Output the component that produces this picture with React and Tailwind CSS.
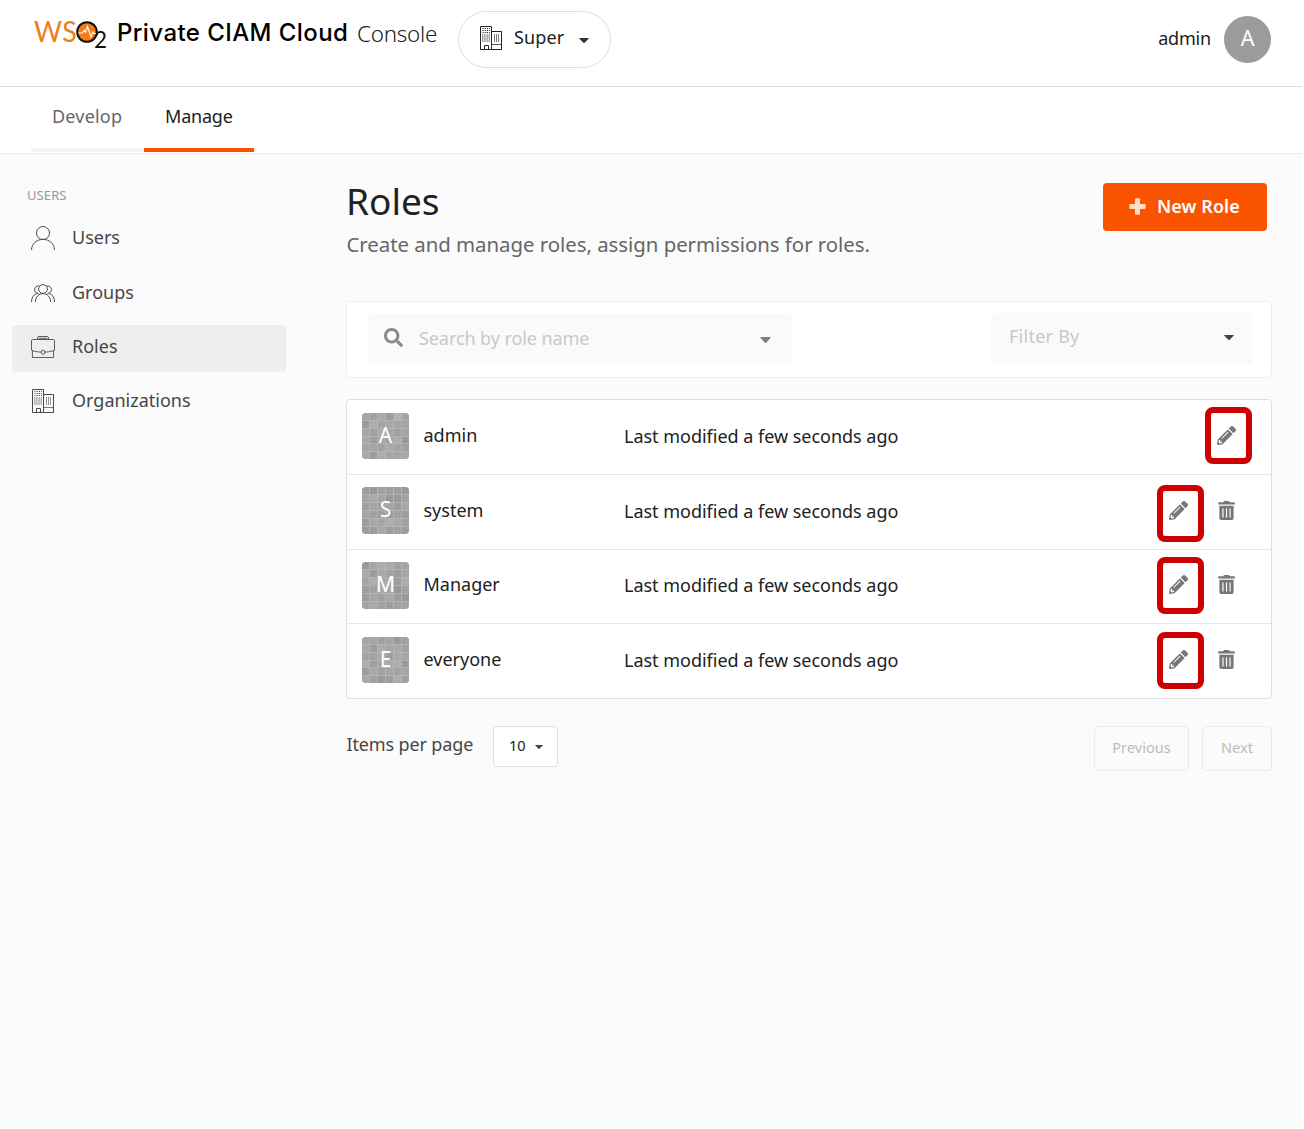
import { FaPencilAlt, FaSearch, FaTrashAlt } from "react-icons/fa";

const ROLES = [
  { name: "admin", letter: "A", row: "h-[75px] pt-[13px] border-b", avatar: "h-[46px]", deletable: false, mark: "left-[858px] top-[7px]",
    shades: ["324163", "053433", "325323", "413250", "332432", "415334"] },
  { name: "system", letter: "S", row: "h-[75px] pt-[13px] border-b", avatar: "h-[47px] -mt-px", deletable: true, mark: "left-[810px] top-[85px]",
    shades: ["102110", "343002", "232314", "321121", "143542", "114121"] },
  { name: "Manager", letter: "M", row: "h-[74px] pt-[12px] border-b", avatar: "h-[47px]", deletable: true, mark: "left-[810px] top-[157px]",
    shades: ["035423", "414213", "353415", "124302", "132410", "342123"] },
  { name: "everyone", letter: "E", row: "h-[74px] pt-[13px]", avatar: "h-[46px]", deletable: true, mark: "left-[810px] top-[232px]",
    shades: ["332302", "415342", "324143", "513450", "142323", "420152"] },
];
const GRAYS = ["#999999", "#9d9d9d", "#a1a1a1", "#a5a5a5", "#a9a9a9", "#adadad"];

function Caret({ className }) {
  return (
    <svg viewBox="0 0 10 5" preserveAspectRatio="none" className={className} fill="currentColor">
      <path d="M.6 0H9.4Q10.2 0 9.6.7L5.6 4.7Q5 5.3 4.4 4.7L.4.7Q-.2 0 .6 0Z" />
    </svg>
  );
}

function PlusIcon({ className }) {
  return (
    <svg viewBox="0 0 17 17" className={className} fill="currentColor">
      <path d="M7 .3H10Q11 .3 11 1.3V6H15.7Q16.7 6 16.7 7V10Q16.7 11 15.7 11H11V15.7Q11 16.7 10 16.7H7Q6 16.7 6 15.7V11H1.3Q.3 11 .3 10V7Q.3 6 1.3 6H6V1.3Q6 .3 7 .3Z" />
    </svg>
  );
}

function BuildingIcon({ className }) {
  return (
    <svg viewBox="0 0 22 24" className={className} fill="none" stroke="currentColor">
      <path d="M.5.5H11.5V23.5H.5ZM11.5 5.5H21.5V23.5H11.5M4.5 23.5V19.5H8.5V23.5" />
      <path d="M12 18.5H21" strokeOpacity=".75" />
      <path d="M2.5 2.5H10M2.5 4.5H10M2.5 6.5H10" strokeDasharray="1.1 1.1" />
      <path d="M2.8 8V16M4.9 8V16M7.1 8V16M9.2 8V16M14.5 8V16M16.5 8V16M18.5 8V16" strokeOpacity=".75" strokeWidth=".8" />
    </svg>
  );
}

function UserIcon() {
  return (
    <svg viewBox="0 0 24 24" className="w-6 h-6" fill="none" stroke="currentColor">
      <circle cx="12" cy="7" r="6.5" />
      <path d="M.5 24C.7 17.6 5.6 13.4 12 13.4S23.3 17.6 23.5 24" />
    </svg>
  );
}

function GroupIcon() {
  return (
    <svg viewBox="0 0 24 18" className="w-6 h-[18px]" fill="none" stroke="currentColor">
      <circle cx="12" cy="5" r="4.4" />
      <path d="M4.4 18C4.5 13 7.6 9.6 12 9.6S19.5 13 19.6 18" />
      <path d="M8.3 1.9C5.8 1.4 3.6 3.2 3.6 5.7C3.6 8 5.2 9.5 7.6 9.5M15.7 1.9C18.2 1.4 20.4 3.2 20.4 5.7C20.4 8 18.8 9.5 16.4 9.5" />
      <path d="M.5 18C.5 13.4 2.6 10.6 5.8 9.4M23.5 18C23.5 13.4 21.4 10.6 18.2 9.4" />
    </svg>
  );
}

function CaseIcon() {
  return (
    <svg viewBox="0 0 24 22" className="w-6 h-[22px]" fill="none" stroke="currentColor" strokeWidth=".9">
      <path d="M.5 4.5Q.5 3.5 1.5 3.5H22.5Q23.5 3.5 23.5 4.5V14.2C20 15.6 17 16 13.8 16.1M10.2 16.1C7 16 4 15.6.5 14.2V4.5" />
      <path d="M1.4 14.8V21.5H22.6V14.8M6.5 3.3V2Q6.5.5 8 .5H16Q17.5.5 17.5 2V3.3M8.3 3.3V2.3H15.7V3.3" />
      <ellipse cx="12" cy="16.2" rx="1.8" ry="2.1" />
    </svg>
  );
}

function Logo() {
  return (
    <svg viewBox="-2 -12 76 52" className="-ml-[2px] mt-[7px] h-[52px] w-[76px] shrink-0">
      <text x="0" y="23" fontFamily="Lato, sans-serif" fontSize="28.5" fill="#f07d15" textLength="28" lengthAdjust="spacingAndGlyphs">W</text>
      <text x="28.2" y="23" fontFamily="Lato, sans-serif" fontSize="28.5" fill="#f07d15" textLength="14.5" lengthAdjust="spacingAndGlyphs">S</text>
      <circle cx="53" cy="13" r="9.8" fill="#f47b16" stroke="#111" strokeWidth="2" />
      <path d="M44.5 14H48.3L50.3 11.5L51.5 13.2L53.5 7.5L57 18L59 13L60 14.5H62" fill="none" stroke="#fff" strokeWidth="1.1" />
      <text x="60" y="29" fontFamily="Lato, sans-serif" fontSize="24" fill="#111" textLength="13" lengthAdjust="spacingAndGlyphs">2</text>
    </svg>
  );
}

function RoleAvatar({ role }) {
  return (
    <div className={`relative w-[47px] shrink-0 overflow-hidden rounded-[4px] ${role.avatar}`}>
      <div className="grid h-full w-full grid-cols-6 grid-rows-6 gap-px bg-[#b3b3b3]">
        {role.shades.join("").split("").map((s, i) => (
          <div key={i} style={{ backgroundColor: GRAYS[+s] }} />
        ))}
      </div>
      <span className="absolute inset-x-0 top-0 text-center text-[21px] leading-[44px] text-white">{role.letter}</span>
    </div>
  );
}

function NavItem({ icon, label, active, className }) {
  return (
    <div className={`flex h-[47px] items-center rounded-[4px] pl-[19px] text-[#464646] ${active ? "bg-[#eeeeee]" : ""} ${className}`}>
      <span className="flex w-6 shrink-0 justify-center pb-[3px] text-[#4a4a4a]">{icon}</span>
      <span className="ml-[17px] pb-[6px] text-[18px] leading-6">{label}</span>
    </div>
  );
}

export default function App() {
  return (
    <div className="h-[1129px] w-[1304px] overflow-hidden bg-white font-['Noto_Sans',sans-serif] text-[#212121]">
      <div className="flex h-[1128px] w-[1302px] flex-col bg-[#fbfbfb]">
        <header className="flex h-[87px] shrink-0 items-start border-b border-[#dddddd] bg-white pl-[34px]">
          <Logo />
          <span className="ml-[9px] mt-[20px] w-[240px] whitespace-nowrap font-['Inter',sans-serif] text-[24px] font-medium leading-[25px] tracking-[0.43px] text-black">Private CIAM Cloud</span>
          <span className="mt-[18px] w-[101px] text-[22.4px] font-light leading-8 tracking-[-0.25px]">Console</span>
          <div className="mt-[11px] flex h-[57px] w-[153px] items-center rounded-full border border-[#dddedf] pl-[21px]">
            <BuildingIcon className="h-6 w-[22px] -mt-[3px] text-[#222]" />
            <span className="ml-[12px] -mt-[5px] text-[18px] tracking-[0.1px]">Super</span>
            <Caret className="ml-[15px] mt-[2px] h-[5px] w-[10px] text-[#333]" />
          </div>
          <span className="ml-auto mt-[24px] text-[18px] leading-7 tracking-[-0.2px]">admin</span>
          <div className="ml-[13px] mr-[31px] mt-4 h-[47px] w-[47px] rounded-full bg-[#9c9c9c] text-center text-[21.5px] leading-[44px] text-white">A</div>
        </header>

        <nav className="flex h-[67px] shrink-0 border-b border-[#ebebeb] bg-white pl-[31px] text-[18px] leading-[58px]">
          <div className="h-[65px] w-[113px] border-b-4 border-[#f4f4f4] pl-[21px] tracking-[0.2px] text-[#666]">Develop</div>
          <div className="h-[65px] w-[110px] border-b-4 border-[#ff5000] pl-[21px] tracking-[-0.2px]">Manage</div>
        </nav>

        <div className="flex flex-1">
          <aside className="w-[346px] shrink-0 pl-3 pr-[60px]">
            <p className="mt-[33px] pl-[15px] text-[13px] leading-4 tracking-[0.1px] text-[#989898]">USERS</p>
            <NavItem className="mt-[13px]" icon={<UserIcon />} label="Users" />
            <NavItem className="mt-[8px]" icon={<GroupIcon />} label="Groups" />
            <NavItem className="mt-[7px]" icon={<CaseIcon />} label="Roles" active />
            <NavItem className="mt-[7px]" icon={<BuildingIcon className="h-6 w-[22px]" />} label="Organizations" />
          </aside>

          <main className="w-[926px]">
            <div className="flex h-[147px] justify-between">
              <div>
                <h1 className="mt-[24px] text-[37px] leading-[46px]">Roles</h1>
                <p className="mt-[4px] pl-[0.5px] text-[20.4px] leading-8 tracking-[-0.03px] text-[#666]">Create and manage roles, assign permissions for roles.</p>
              </div>
              <button className="mr-[5px] mt-[29px] flex h-12 w-[164px] items-center rounded-[4px] bg-[#fa5400] pl-[26px] text-white">
                <PlusIcon className="-mt-[2px] h-[17px] w-[17px] opacity-80" />
                <span className="ml-[11px] pb-px text-[18px] font-semibold tracking-[0.05px]">New Role</span>
              </button>
            </div>

            <section className="flex h-[77px] items-start justify-between rounded-[4px] border border-[#eeeeee] bg-white pl-[21px] pr-[19px]">
              <div className="mt-[12px] flex h-[51px] w-[424px] items-center rounded-[4px] bg-[#fafafa] pl-[16px] pr-[21px]">
                <FaSearch className="h-[19px] w-[19px] -mt-[4px] text-[#8a8a8a]" />
                <span className="ml-[16px] pb-[3px] text-[18px] tracking-[-0.08px] text-[#c8c8c8]">Search by role name</span>
                <Caret className="ml-auto mt-px h-[6px] w-[11px] text-[#808080]" />
              </div>
              <div className="mt-[11px] flex h-[51px] w-[261px] items-center justify-between rounded-[4px] bg-[#fafafa] pl-[18px] pr-[18px]">
                <span className="pb-[5px] text-[18px] tracking-[0.25px] text-[#c8c8c8]">Filter By</span>
                <Caret className="-mt-[2px] h-[5px] w-[10px] text-[#444]" />
              </div>
            </section>

            <section className="relative mt-[21px] rounded-[4px] border border-[#dddedf] bg-white">
              {ROLES.map((role) => (
                <div key={role.name} className={`flex items-start border-[#e6e6e6] pl-[15px] pr-[35px] text-[18px] leading-[44px] ${role.row}`}>
                  <RoleAvatar role={role} />
                  <span className="ml-[14.5px] w-[200.5px]">{role.name}</span>
                  <span className="pt-px tracking-[-0.02px]">Last modified a few seconds ago</span>
                  <div className="ml-auto flex h-[45px] items-center text-[#777]">
                    <FaPencilAlt className="h-[19px] w-[19px]" />
                    {role.deletable && <FaTrashAlt className="ml-[30px] mr-px h-[19px] w-[17px]" />}
                  </div>
                </div>
              ))}
              {ROLES.map((role) => (
                <div key={role.name} className={`absolute h-[57px] w-[47px] rounded-[8px] border-[6px] border-[#cc0000] ${role.mark}`} />
              ))}
            </section>

            <footer className="mt-[27px] flex items-start">
              <span className="w-[128px] whitespace-nowrap pl-[0.5px] text-[18px] leading-9 tracking-[-0.14px] text-[#464646]">Items per page</span>
              <div className="ml-[19px] flex h-[41px] w-[65px] items-center rounded-[4px] border border-[#dddedf] bg-white pl-[15px]">
                <span className="pb-[2px] text-[14.6px]">10</span>
                <Caret className="ml-[9px] h-[4px] w-[8px] text-[#444]" />
              </div>
              <button className="ml-auto h-[45px] w-[95px] rounded-[4px] border border-[#ebebeb] pb-[3px] text-[14.6px] leading-[38px] text-[#bbb]">Previous</button>
              <button className="ml-[13px] h-[45px] w-[70px] rounded-[4px] border border-[#ebebeb] pb-[3px] text-[14.6px] leading-[38px] text-[#bbb]">Next</button>
            </footer>
          </main>
        </div>
      </div>
    </div>
  );
}
